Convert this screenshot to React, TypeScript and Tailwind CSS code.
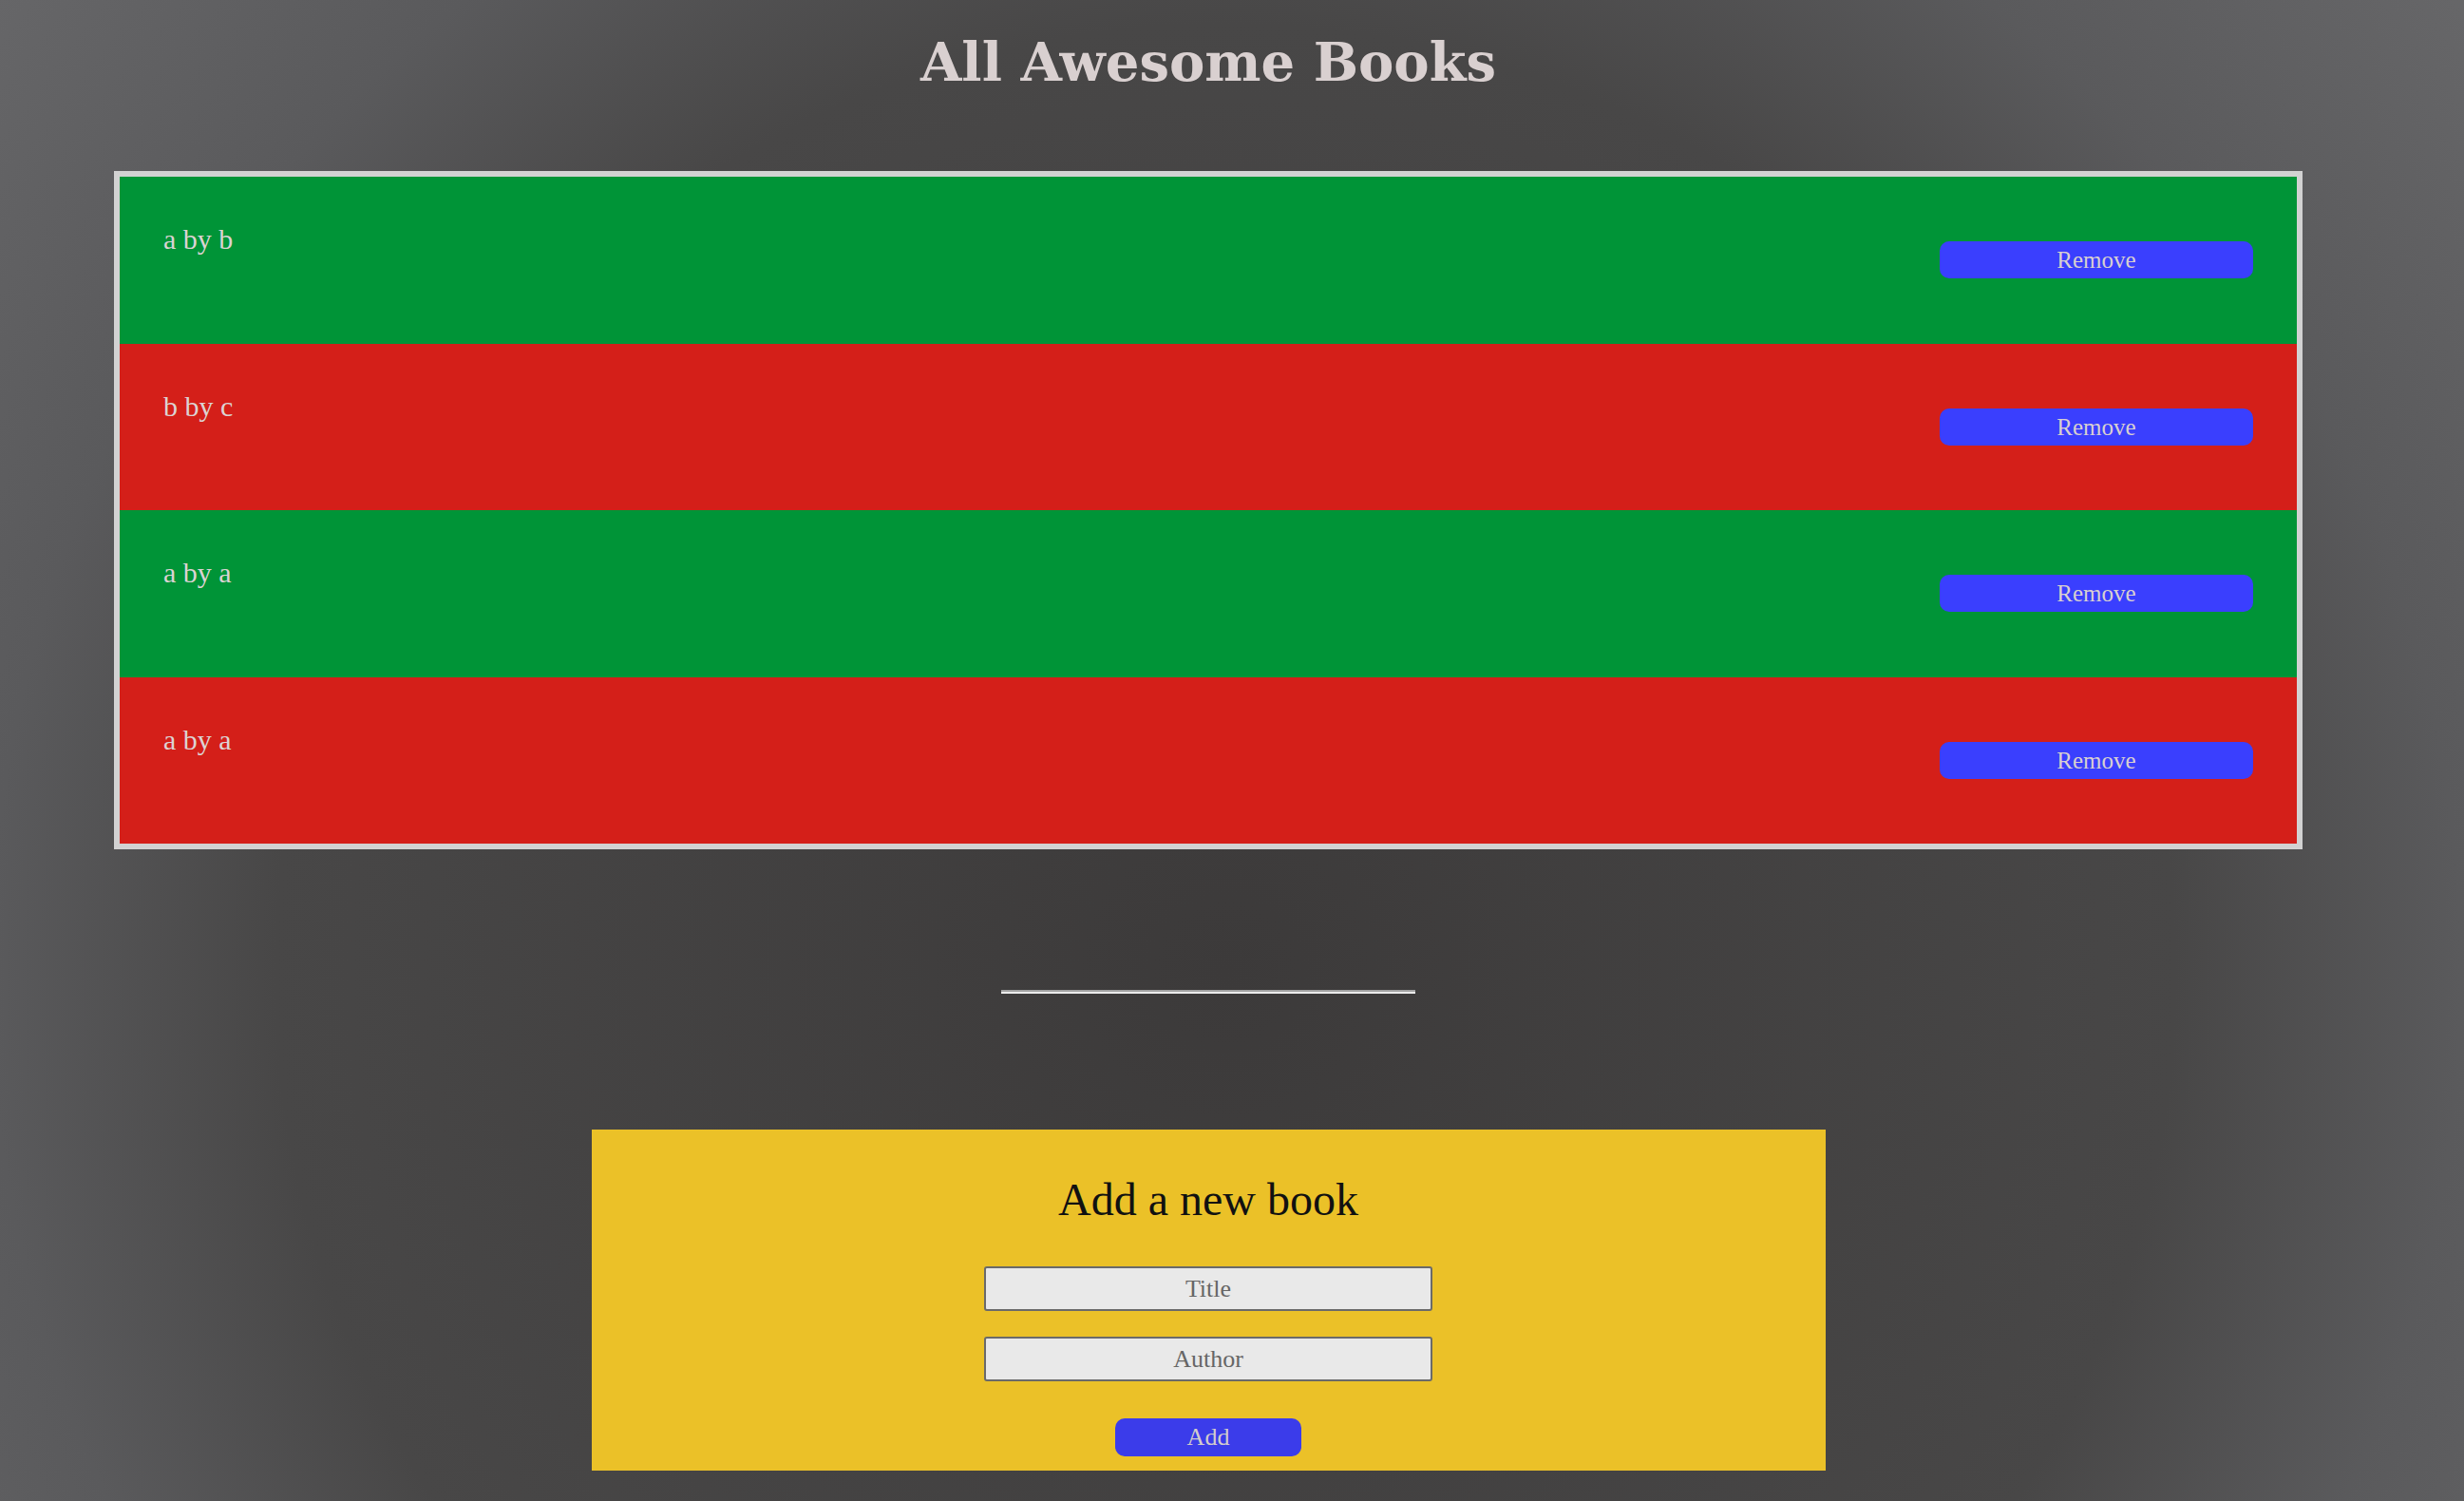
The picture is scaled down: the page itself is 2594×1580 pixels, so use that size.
const books = [
  { title: 'a', author: 'b' },
  { title: 'b', author: 'c' },
  { title: 'a', author: 'a' },
  { title: 'a', author: 'a' },
]

export default function App() {
  return (
    <div className="min-h-screen w-full bg-[radial-gradient(circle_at_1290px_1025px,#3c3a3a_0px,#484747_1000px,#5a5a5c_1300px,#666668_1650px)] font-['Liberation_Serif',serif]">
      <div className="w-[2544px] flex flex-col items-center">
        <h1 className="pt-[37px] text-[56px] leading-none font-bold text-[#d9d0d0] font-['DejaVu_Serif',serif]">
          All Awesome Books
        </h1>

        <ul className="mt-[87px] w-[2304px] border-[6px] border-[#d2d2d2]">
          {books.map((book, i) => (
            <li
              key={i}
              className={`h-[175.5px] flex justify-between px-[46px] ${i % 2 === 0 ? 'bg-[#009437]' : 'bg-[#d41f19]'}`}
            >
              <p className="mt-[49px] text-[30px] leading-[34px] text-[#dcd3d3]">
                {book.title} by {book.author}
              </p>
              <button className="self-center w-[330px] h-[39px] rounded-[10px] bg-[#3a3ffe] text-[25px] leading-none text-[#d8d0d0]">
                Remove
              </button>
            </li>
          ))}
        </ul>

        <hr className="mt-[148px] w-[436px] border-t-2 border-b-2 border-t-[#a3a3a3] border-b-[#ececec]" />

        <section className="mt-[143px] w-[1299px] h-[359px] bg-[#ebc128] flex flex-col items-center">
          <h2 className="mt-[44px] text-[48px] leading-[60px] text-[#111]">Add a new book</h2>
          <form className="mt-[40px] flex flex-col items-center" onSubmit={(e) => e.preventDefault()}>
            <input
              placeholder="Title"
              className="w-[472px] h-[47px] rounded-[3px] border-2 border-[#6a6a6a] bg-[#e9e9e9] text-center text-[26px] placeholder:text-[#666]"
            />
            <input
              placeholder="Author"
              className="mt-[27px] w-[472px] h-[47px] rounded-[3px] border-2 border-[#6a6a6a] bg-[#e9e9e9] text-center text-[26px] placeholder:text-[#666]"
            />
            <button className="mt-[39px] w-[196px] h-[40px] rounded-[10px] bg-[#3b3cea] text-[26px] leading-none text-[#d2cccc]">
              Add
            </button>
          </form>
        </section>
      </div>
    </div>
  )
}
